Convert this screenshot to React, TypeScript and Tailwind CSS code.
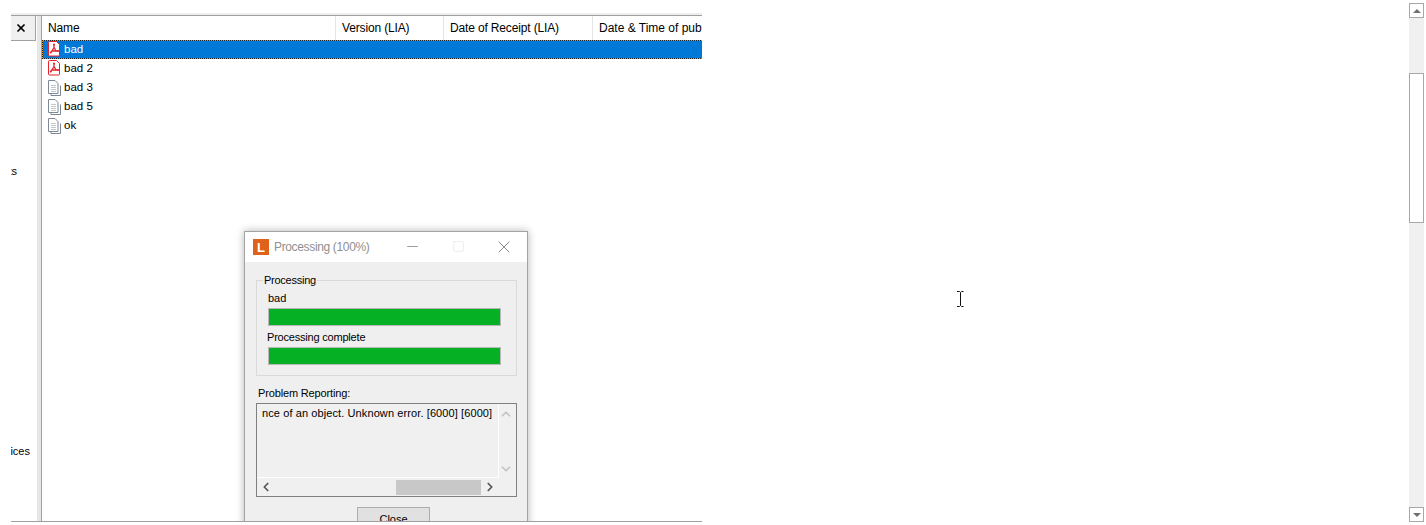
import { ChevronDown, ChevronLeft, ChevronRight, ChevronUp, Minus, Square, X } from 'lucide-react'

const files = [
  { name: 'bad', kind: 'pdf', selected: true },
  { name: 'bad 2', kind: 'pdf' },
  { name: 'bad 3', kind: 'doc' },
  { name: 'bad 5', kind: 'doc' },
  { name: 'ok', kind: 'doc' },
]

function PdfIcon() {
  return (
    <svg width="13" height="16" viewBox="0 0 13 16" className="-mt-[2px] shrink-0">
      <path d="M1.500.5h7l3 3v10.500a1 1 0 0 1-1 1h-9a1 1 0 0 1-1-1v-12.500a1 1 0 0 1 1-1z" fill="#fff" stroke="#e8212a" />
      <path d="M6 3.500v3l-3 5M6 6.500l2.200 3.500h-5M8.200 10h2.300" fill="none" stroke="#e8212a" strokeWidth="1.300" />
      <circle cx="6" cy="3.500" r="1" fill="#e8212a" />
      <circle cx="2.800" cy="11.500" r="1" fill="#e8212a" />
      <circle cx="10" cy="10" r="1" fill="#e8212a" />
    </svg>
  )
}

function DocIcon() {
  return (
    <svg width="13" height="16" viewBox="0 0 13 16" className="shrink-0">
      <path d="M3 3v12.500h9.500v-10" fill="none" stroke="#7c8796" />
      <path d="M.5.500h6.500l3 3v10h-9.500z" fill="#fff" stroke="#7f8895" />
      <path d="M3 5.500h5M3 7.500h5M3 9.500h5M3 11.500h5" stroke="#c3c7cc" />
    </svg>
  )
}

function Bar() {
  return <div className="h-[18px] w-[233px] border border-[#b8b8b8] bg-[#06b025]" />
}

function Dialog() {
  return (
    <div className="absolute left-[233px] top-[231px] w-[284px] border border-[#a3a3a3] bg-[#efefef] text-[11px] text-black shadow-[0_0_8px_rgba(0,0,0,0.3)]">
      <div className="flex h-[30px] items-center bg-white pl-[8px]">
        <div className="flex h-[16px] w-[16px] items-center justify-center bg-[#e0621a] text-[13px] font-bold leading-none text-white">L</div>
        <span className="ml-[5px] text-[12px] tracking-[-0.35px] text-[#8f8f8f]">Processing (100%)</span>
        <div className="-mt-[1px] ml-auto flex">
          <div className="flex w-[46px] justify-center pl-[1px] pt-[1px] text-[#8a8a8a]"><Minus size={17} strokeWidth={1.2} /></div>
          <div className="flex w-[46px] items-center justify-center text-[#dedede]"><Square size={13} strokeWidth={1} /></div>
          <div className="flex w-[46px] justify-center text-[#8a8a8a]"><X size={20} strokeWidth={1.2} /></div>
        </div>
      </div>

      <fieldset className="ml-[11px] mt-[11px] w-[261px] border border-[#d9d9d9] pb-[10px] pl-[11px]">
        <legend className="-ml-[5px] px-[1px] leading-[14px] tracking-[-0.25px]">Processing</legend>
        <div className="mt-[4px] leading-[14px]">bad</div>
        <div className="mt-[3px]"><Bar /></div>
        <div className="-ml-[1px] mt-[4px] leading-[14px] tracking-[-0.2px]">Processing complete</div>
        <div className="mt-[3px]"><Bar /></div>
      </fieldset>

      <div className="ml-[13px] mt-[10px] leading-[14px] tracking-[-0.15px]">Problem Reporting:</div>
      <div className="ml-[11px] mt-[3px] h-[94px] w-[261px] border border-[#808080] bg-[#f0f0f0]">
        <div className="flex h-[74px]">
          <div className="w-[242px] overflow-hidden whitespace-nowrap border-b border-r border-white pl-[5px] pt-[2px] leading-[14px] tracking-[0.1px]">
            nce of an object. Unknown error. [6000] [6000]
          </div>
          <div className="flex flex-1 flex-col items-center justify-between pb-[2px] pr-[3px] pt-[3px] text-[#c4c4c4]">
            <ChevronUp size={14} strokeWidth={3} />
            <ChevronDown size={14} strokeWidth={3} />
          </div>
        </div>
        <div className="flex h-[18px] items-center">
          <ChevronLeft size={14} strokeWidth={3} className="ml-[2px] text-[#555]" />
          <div className="ml-[123px] h-[15px] w-[85px] bg-[#c8c8c8]" />
          <ChevronRight size={14} strokeWidth={3} className="ml-[2px] text-[#555]" />
        </div>
      </div>

      <button className="ml-[112px] mt-[10px] h-[24px] w-[73px] border border-[#adadad] bg-[#e1e1e1] text-black">Close</button>
    </div>
  )
}

function FileTable() {
  return (
    <div className="flex-1 border-l border-[#a0a0a0]">
      <div className="flex h-[24px] items-center whitespace-nowrap tracking-[-0.15px]">
        <div className="w-[293px] pl-[6px]">Name</div>
        <div className="flex h-full w-[108px] items-center border-l border-[#e5e5e5] pl-[6px]">Version (LIA)</div>
        <div className="flex h-full w-[149px] items-center border-l border-[#e5e5e5] pl-[6px]">Date of Receipt (LIA)</div>
        <div className="flex h-full flex-1 items-center overflow-hidden border-l border-[#e5e5e5] pl-[6px] tracking-normal">Date &amp; Time of publication</div>
      </div>
      {files.map((f) => (
        <div
          key={f.name}
          className={f.selected
            ? 'flex h-[19px] items-center gap-[3px] border border-[#e8912d] bg-[#0078d7] pl-[5px] text-[11.5px] text-white outline outline-dotted -outline-offset-1 outline-[#222222]'
            : 'flex h-[19px] items-center gap-[3px] pl-[6px] text-[11.5px]'}
        >
          {f.kind === 'pdf' ? <PdfIcon /> : <DocIcon />}
          <span>{f.name}</span>
        </div>
      ))}
    </div>
  )
}

function PageScrollbar() {
  return (
    <div className="flex h-[519px] w-[15px] flex-col bg-[#f0f0f0]">
      <div className="flex h-[15px] items-center justify-center border border-[#a8a8a8] bg-white">
        <div className="h-0 w-0 border-x-[4px] border-b-[4px] border-x-transparent border-b-[#707070]" />
      </div>
      <div className="mt-[55px] h-[150px] border border-[#a8a8a8] bg-white" />
      <div className="mt-auto flex h-[15px] items-center justify-center border border-[#a8a8a8] bg-white">
        <div className="h-0 w-0 border-x-[4px] border-t-[4px] border-x-transparent border-t-[#707070]" />
      </div>
    </div>
  )
}

export default function App() {
  return (
    <div className="relative flex h-[525px] w-[1426px] overflow-hidden bg-white font-['Liberation_Sans',sans-serif] text-[12px] text-black">
      <div className="relative ml-[11px] mt-[13px] h-[509px] w-[691px] overflow-hidden border-b border-[#a0a0a0]">
        <div className="h-[2px] bg-[#eeeeee]" />
        <div className="h-[1px] bg-[#a0a0a0]" />
        <div className="flex h-[505px]">
          <div className="w-[26px] shrink-0 text-[11px]">
            <div className="flex h-[25px] w-[25px] items-center justify-center border-b border-r border-[#a0a0a0] bg-[#f0f0f0] pr-[5px]">
              <X size={12} strokeWidth={3.5} />
            </div>
            <div className="mt-[123px] flex h-[14px] w-[6px] justify-end overflow-hidden leading-[14px]">
              <span>Documents</span>
            </div>
            <div className="mt-[266px] flex h-[14px] w-[19px] justify-end overflow-hidden leading-[14px]">
              <span>Services</span>
            </div>
          </div>
          <div className="w-[4px] shrink-0 bg-[#e6e6e6]" />
          <FileTable />
        </div>
        <div className="absolute left-0 top-[-13px]">
          <Dialog />
        </div>
      </div>

      <div className="flex flex-1 justify-end pr-[2px] pt-[3px]">
        <PageScrollbar />
      </div>

      {/* text cursor */}
      <svg width="8" height="16" viewBox="0 0 8 16" className="absolute left-[956px] top-[291px]">
        <path d="M1 .5h2.500l1 1 1-1h2M4.500 1.500v13M1 15.500h2.500l1-1 1 1h2" fill="none" stroke="#111" />
      </svg>
    </div>
  )
}
